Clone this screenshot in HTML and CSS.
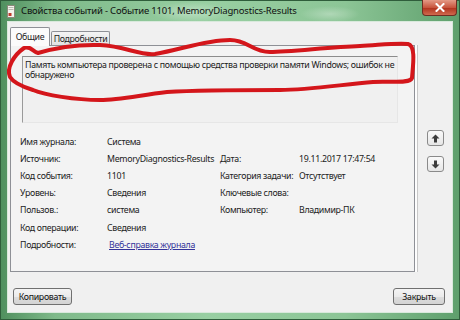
FILE: index.html
```html
<!DOCTYPE html>
<html lang="ru">
<head>
<meta charset="utf-8">
<title>Свойства событий</title>
<link rel="stylesheet" href="styles.css">
</head>
<body>
<div class="window">
  <div class="titlebar">
    <svg class="app-icon" width="8" height="13" viewBox="0 0 8 13">
      <rect x="0.5" y="0.5" width="7" height="12" fill="#f4f4ee" stroke="#8a8a7a"/>
      <rect x="1.5" y="2" width="5" height="1" fill="#b9b9b0"/>
      <rect x="1.5" y="4" width="5" height="1" fill="#b9b9b0"/>
      <rect x="1.5" y="8" width="3" height="3" fill="#c0392b"/>
    </svg>
    <span class="title">Свойства событий - Событие 1101, MemoryDiagnostics-Results</span>
    <div class="close">
      <svg width="10" height="9" viewBox="0 0 10 9"><path d="M1.5 1 L8.5 8 M8.5 1 L1.5 8" stroke="#fff" stroke-width="2" stroke-linecap="square"/></svg>
    </div>
  </div>
  <div class="client">
    <div class="main">
      <div class="tabs-area">
        <div class="tabs">
          <div class="tab active">Общие</div>
          <div class="tab">Подробности</div>
        </div>
        <div class="panel">
          <div class="message">Память компьютера проверена с помощью средства проверки памяти Windows; ошибок не обнаружено</div>
          <div class="fields">
            <span class="label">Имя журнала:</span><span class="value">Система</span><span></span><span></span>
            <span class="label">Источник:</span><span class="value">MemoryDiagnostics-Results</span><span class="label">Дата:</span><span class="value">19.11.2017 17:47:54</span>
            <span class="label">Код события:</span><span class="value">1101</span><span class="label">Категория задачи:</span><span class="value">Отсутствует</span>
            <span class="label">Уровень:</span><span class="value">Сведения</span><span class="label">Ключевые слова:</span><span class="value"></span>
            <span class="label">Пользов.:</span><span class="value">система</span><span class="label">Компьютер:</span><span class="value">Владимир-ПК</span>
            <span class="label">Код операции:</span><span class="value">Сведения</span><span></span><span></span>
            <span class="label">Подробности:</span><span class="value"><a class="link" href="#">Веб-справка журнала</a></span><span></span><span></span>
          </div>
        </div>
      </div>
      <div class="side">
        <div class="nav-btn">
          <svg width="9" height="9" viewBox="0 0 9 9"><path d="M4.5 0.5 L8.5 4.5 L6 4.5 L6 8.5 L3 8.5 L3 4.5 L0.5 4.5 Z" fill="#3c3c3c"/></svg>
        </div>
        <div class="nav-btn">
          <svg width="9" height="9" viewBox="0 0 9 9"><path d="M4.5 8.5 L8.5 4.5 L6 4.5 L6 0.5 L3 0.5 L3 4.5 L0.5 4.5 Z" fill="#3c3c3c"/></svg>
        </div>
      </div>
    </div>
    <div class="footer">
      <div class="btn copy">Копировать</div>
      <div class="btn close-btn">Закрыть</div>
    </div>
  </div>
  <svg class="annotation" width="460" height="320" viewBox="0 0 460 320">
    <path d="M 10 77 C 6 68, 14 55, 24 48 C 30 45, 33 52, 38 53 C 48 50, 70 44, 100 45 C 125 46, 140 56, 155 54 C 180 50, 205 40, 230 40 C 248 40, 252 52, 270 52 C 290 52, 330 47, 360 46 C 380 45, 395 43, 408 44 C 416 46, 413 65, 412 78 C 410 84, 390 81, 373 82 C 345 84, 310 90, 280 90 C 250 90, 200 90, 167 92 C 140 95, 120 100, 100 100 C 75 100, 45 95, 33 90 C 20 86, 13 82, 10 77 Z" fill="none" stroke="#d4161b" stroke-width="4" stroke-linecap="round" stroke-linejoin="round"/>
  </svg>
</div>
</body>
</html>
```

FILE: styles.css
```css
html, body {
  margin: 0;
  padding: 0;
}

body {
  width: 460px;
  height: 320px;
  overflow: hidden;
  font-family: "Noto Sans", "Open Sans", "DejaVu Sans", sans-serif;
  font-size: 8.8px;
  letter-spacing: -0.32px;
  color: #1e1e1e;
}

.window {
  position: relative;
  width: 460px;
  height: 320px;
  display: flex;
  flex-direction: column;
  box-sizing: border-box;
  background:
    radial-gradient(ellipse 40px 10px at 190px 12px, rgba(255,255,255,0.35), rgba(255,255,255,0) 100%),
    radial-gradient(ellipse 30px 8px at 330px 14px, rgba(255,255,255,0.3), rgba(255,255,255,0) 100%),
    linear-gradient(to right, #4f8f5e 0%, #7fba8a 12%, #98cfa2 45%, #8cc596 75%, #5e9f6c 100%);
  box-shadow: inset 0 0 0 1px #2f5d3b;
}

.titlebar {
  height: 21px;
  display: flex;
  align-items: center;
  padding-left: 7px;
}

.app-icon {
  flex: none;
  margin-right: 6px;
  margin-top: 1px;
}

.title {
  font-size: 9.5px;
  letter-spacing: -0.18px;
  color: #101010;
  white-space: nowrap;
}

.close {
  margin-left: auto;
  margin-right: 3px;
  align-self: flex-start;
  width: 35px;
  height: 16px;
  box-sizing: border-box;
  border: 1px solid #6e2e22;
  border-top: none;
  border-radius: 0 0 4px 4px;
  background: linear-gradient(#e49a86, #c8553e 50%, #b23520 55%, #cf6a4e);
  display: flex;
  align-items: center;
  justify-content: center;
}

.client {
  flex: 1;
  margin: 0 7px 7px 7px;
  display: flex;
  flex-direction: column;
  background: #f0f0f0;
  border: 1px solid #d9e9dc;
  padding: 5px 0 7px 2px;
}

.main {
  display: flex;
}

.tabs-area {
  width: 405px;
  display: flex;
  flex-direction: column;
}

.tabs {
  display: flex;
  align-items: flex-end;
  height: 18px;
}

.tab {
  height: 14px;
  box-sizing: border-box;
  border: 1px solid #8e9096;
  border-bottom: none;
  border-radius: 2px 2px 0 0;
  background: linear-gradient(#f4f4f4, #e2e2e2);
  display: flex;
  align-items: center;
  justify-content: center;
  width: 59px;
  margin-left: 1px;
}

.tab.active {
  height: 19px;
  width: 40px;
  margin-left: 0;
  margin-bottom: -1px;
  background: #fbfbfb;
  position: relative;
  z-index: 1;
  padding-bottom: 1px;
}

.panel {
  height: 227px;
  box-sizing: border-box;
  border: 1px solid #8e9096;
  background: #f3f3f3;
  padding: 10px 0 0 9px;
  box-shadow: 2px 0 0 #fdfdfd, 3px 0 0 #c8c8c8;
}

.message {
  margin-left: 2px;
  width: 376px;
  height: 67px;
  box-sizing: border-box;
  border: 1px solid;
  border-color: #8c8c8c #e6e6e6 #e6e6e6 #9a9a9a;
  background: #f0f0f0;
  padding: 3px 0 0 2px;
  line-height: 10px;
  color: #1a1a1a;
}

.fields {
  margin-top: 10px;
  display: grid;
  grid-template-columns: 87px 113px 79px 1fr;
  grid-auto-rows: 17.2px;
  align-items: center;
  white-space: nowrap;
}

.label,
.value {
  color: #222;
}

.link {
  color: #33339a;
  text-decoration: underline;
  padding-left: 2px;
}

.side {
  display: flex;
  flex-direction: column;
  padding: 103px 0 0 12px;
}

.nav-btn {
  width: 17px;
  height: 16px;
  box-sizing: border-box;
  border: 1px solid #8a8a8a;
  border-radius: 3px;
  background: linear-gradient(#fafafa, #e6e6e6);
  display: flex;
  align-items: center;
  justify-content: center;
}

.nav-btn + .nav-btn {
  margin-top: 10px;
}

.footer {
  margin-top: auto;
  display: flex;
  justify-content: space-between;
}

.btn {
  height: 17px;
  box-sizing: border-box;
  border: 1px solid #707070;
  border-radius: 3px;
  background: linear-gradient(#f4f4f4 0%, #ebebeb 50%, #dddddd 51%, #d3d3d3 100%);
  display: flex;
  align-items: center;
  justify-content: center;
  color: #111;
}

.copy {
  width: 59px;
  margin-left: 3px;
}

.close-btn {
  width: 52px;
  margin-right: 7px;
}

.annotation {
  position: absolute;
  left: 0;
  top: 0;
  pointer-events: none;
}
```
